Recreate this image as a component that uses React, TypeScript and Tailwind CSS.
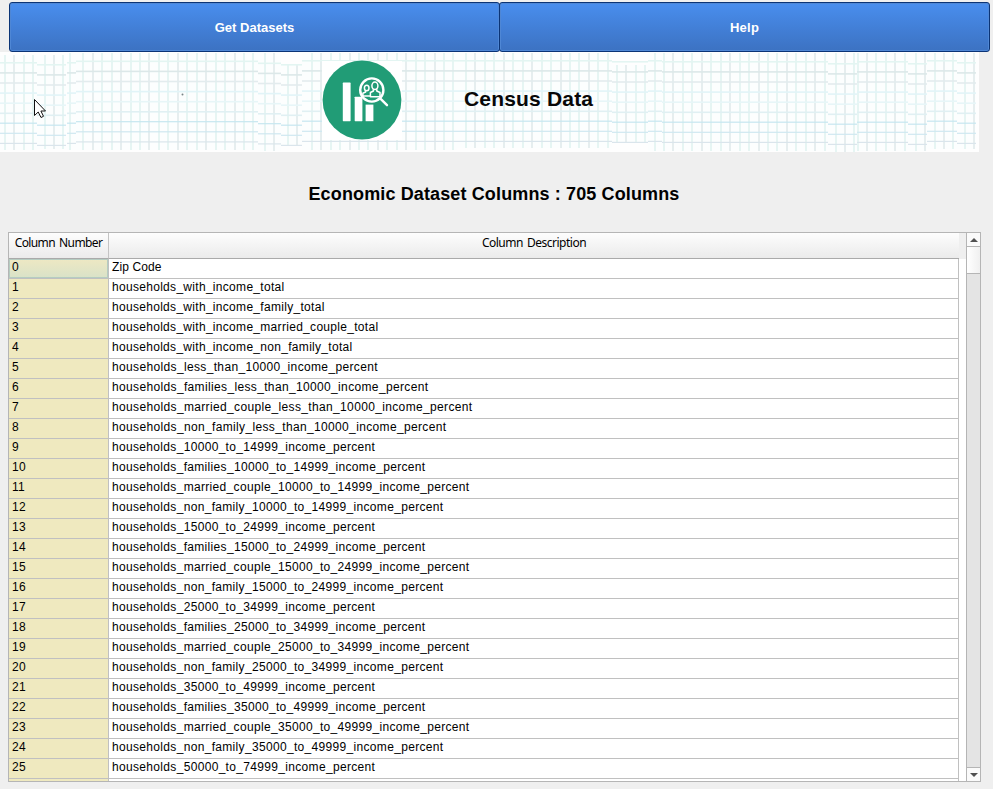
import React from "react";

const descriptions = [
  "Zip Code",
  "households_with_income_total",
  "households_with_income_family_total",
  "households_with_income_married_couple_total",
  "households_with_income_non_family_total",
];
const brackets = ["less_than_10000", "10000_to_14999", "15000_to_24999", "25000_to_34999", "35000_to_49999"];
for (const b of brackets) {
  for (const g of ["", "families_", "married_couple_", "non_family_"]) {
    descriptions.push(`households_${g}${b}_income_percent`);
  }
}
descriptions.push("households_50000_to_74999_income_percent");

// Graph-paper strips: left edge, right edge, vertical shift, top, bottom, first vertical rule
const strips = [
  [0, 37, 1, 55, 150, 5],
  [37, 66, 3, 55, 149, 44.5],
  [67, 76, 1, 53, 150, 70],
  [76, 258, -0.5, 53, 150, 83.3],
  [258, 281, 1.5, 53, 151, 265],
  [281, 302, 3, 65, 145, 288],
  [302, 457, -1, 53, 150, 311.7],
  [457, 602, -1, 53, 148, 466],
  [602, 612, -1, 53, 148, 608],
  [612, 648, 0, 65, 142, 616.7],
  [648, 662, -1, 53, 151, 654.5],
  [662, 828, 0, 53, 151, 664],
  [828, 857, 2, 53, 152, 835.5],
  [857, 908, 0, 53, 151, 857.5],
  [908, 927, 2, 53, 151, 916],
  [927, 957, -1, 53, 149, 934.5],
  [957, 976, 1, 53, 149, 965],
];
const lineColors = ["#e3f5f2", "#dce8e9", "#e3ecee", "#e1f4f8", "#e7f6f8", "#e0f0f3", "#c6e7f0", "#cfe8f1", "#dae5ec"];

function Banner() {
  return (
    <svg width="979" height="100" viewBox="0 52 979 100" className="block bg-[#fefefe]">
      {strips.map(([x1, x2, dy, top, bottom, start], s) => {
        const cols = Array.from({ length: Math.max(0, Math.ceil((x2 - start) / 9.45)) }, (_, i) => start + i * 9.45);
        return (
          <g key={s}>
            <rect x={x1} y={top} width={x2 - x1} height={bottom - top} fill="#fcfefe" />
            {cols.map((x, i) => (
              <rect key={i} x={Math.round(x) - 1} y={top} width="2" height={bottom - top} fill={i % 3 === 1 ? "#e6eeef" : "#e6f5f3"} />
            ))}
            {lineColors.map((c, i) => (
              <rect key={c} x={x1} y={61 + dy + i * 10.1} width={x2 - x1} height={i > 5 ? 1.2 : 1.6} fill={c} />
            ))}
          </g>
        );
      })}
      <rect x="322" y="61" width="80" height="79" fill="#fff" />
      <circle cx="362" cy="100" r="39.4" fill="#219c76" />
      <g fill="#fff">
        <rect x="342.8" y="82.6" width="7.8" height="38.6" rx="0.6" />
        <rect x="354.7" y="96.8" width="7.7" height="24.4" rx="0.4" />
        <rect x="365.6" y="104.6" width="7.8" height="16.6" />
      </g>
      <circle cx="371.8" cy="90" r="11.6" fill="#219c76" stroke="#fff" strokeWidth="2.4" />
      <path d="M380.4 98.600l6.600 6.600" stroke="#fff" strokeWidth="2.400" strokeLinecap="round" />
      <g fill="none" stroke="#fff" strokeWidth="1.500" strokeLinejoin="round">
        <ellipse cx="374.900" cy="85.800" rx="3" ry="3.800" />
        <path d="M373.400 89.300v1.700l-3 1.500v4.300h9.600v-4.300l-3.200-1.500v-1.700" />
        <ellipse cx="366.700" cy="88" rx="2.300" ry="2.800" />
        <path d="M365.600 90.700v1.300l-2.700 1.300v2.800h7.500" />
      </g>
      <circle cx="182.500" cy="94.500" r="1" fill="#788486" />
      <text x="464" y="106" textLength="129" fontSize="21" fontWeight="700" fill="#080808" className="font-['Liberation_Sans',sans-serif]">Census Data</text>
      <path d="M34.500 99.500v16l3.700-3.500 2.800 5.500 2.500-1.200-2.600-5.300h4.600z" fill="#fff" stroke="#111" strokeWidth="1" />
    </svg>
  );
}

const button = "flex h-[50px] w-[491px] items-center justify-center rounded-[3px] border border-[#0b3476] bg-linear-to-b from-[#498eee] to-[#3c72c2] pt-px text-[13px] font-bold text-white shadow-[inset_0_0_0_1px_#4f87d5]";

export default function App() {
  return (
    <div className="flex h-[789px] w-[993px] flex-col overflow-hidden bg-[#efefef] font-['Liberation_Sans',sans-serif] text-black">
      <nav className="flex pt-[2px] pl-[9px]">
        <button className={button}>Get Datasets</button>
        <button className={`${button} -ml-px tracking-[0.25px]`}>Help</button>
      </nav>
      <Banner />
      <h1 className="flex h-20 items-center justify-center pt-[4px] pr-[5px] text-[18px] font-bold tracking-[0.13px]">
        <span>Economic Dataset Columns : 705 Columns</span>
      </h1>
      <main className="ml-2 flex h-[550px] w-[973px] border border-[#b5b5b5] bg-white">
        <section className="flex min-w-0 flex-1 flex-col overflow-hidden">
          <header className="flex h-[26px] shrink-0 bg-[#efefef] font-['Noto_Sans',sans-serif] text-[12px] leading-[19px] tracking-[-0.6px] [word-spacing:1.5px]">
            <div className="w-[100px] border-r border-b border-r-[#c4c4c4] border-b-[#aaa] bg-linear-to-b from-[#fdfdfd] to-[#ebebeb] text-center"><span>Column Number</span></div>
            <div className="w-[850px] border-b border-[#aaa] bg-linear-to-b from-[#fdfdfd] to-[#ebebeb] text-center tracking-[-0.5px]"><span>Column Description</span></div>
          </header>
          <div className="w-[950px] flex-1 overflow-hidden border-r border-[#c0c0c0] text-[12px] leading-[17px]">
            {[...descriptions, ""].map((d, i) => (
              <div key={i} className="flex h-5 border-b border-[#c0c0c0]">
                <div className={`w-[100px] border-r border-r-[#c0c0c0] pl-[3px] tracking-[0.3px] ${i === 0 ? "bg-linear-to-b from-[#eee8c3] to-[#d9e2c8] shadow-[inset_0_0_0_1px_#b5ccc1]" : "bg-[#efe9bf]"}`}>{d && i}</div>
                <div className={`pl-[3px] whitespace-nowrap ${i === 0 ? "tracking-[0.12px]" : i < 5 ? "tracking-[0.3px]" : i < 9 ? "tracking-[0.35px]" : "tracking-[0.325px]"}`}><span>{d}</span></div>
              </div>
            ))}
          </div>
        </section>
        <aside className="flex w-[14px] flex-col border-l border-[#b5b5b5] bg-[#e4e4e4]">
          <div className="flex h-[14px] items-center justify-center border-b border-[#b5b5b5] bg-[#fafafa]">
            <svg width="8" height="4" viewBox="0 0 8 4"><path d="M4 0L8 4H0z" fill="#505050" /></svg>
          </div>
          <div className="h-[27px] border-b border-[#b5b5b5] bg-linear-to-r from-white to-[#f0f0f0]" />
          <div className="flex-1" />
          <div className="flex h-[14px] items-center justify-center border-t border-[#b5b5b5] bg-[#fafafa]">
            <svg width="8" height="4" viewBox="0 0 8 4"><path d="M0 0H8L4 4z" fill="#505050" /></svg>
          </div>
        </aside>
      </main>
    </div>
  );
}
